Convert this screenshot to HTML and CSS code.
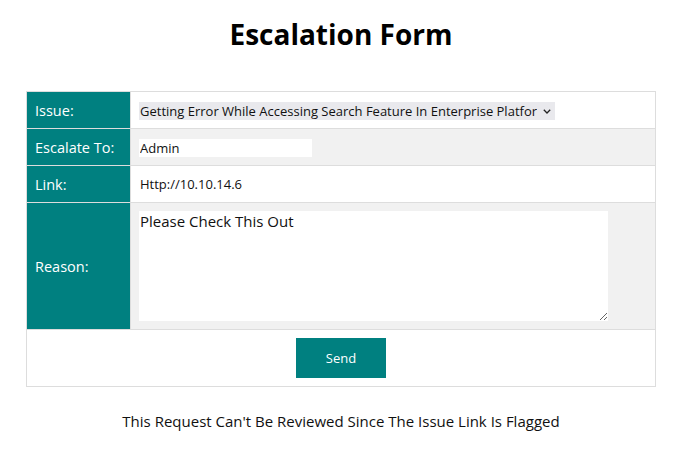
FILE: index.html
```html
<!DOCTYPE html>
<html>
<head>
<meta charset="utf-8">
<link rel="stylesheet" href="styles.css">
</head>
<body>
<div class="page">
<h1 class="title">Escalation Form</h1>
<table class="form-table">
  <tr class="row">
    <td class="label">Issue:</td>
    <td class="field">
      <span class="select-wrap">
        <select class="issue-select">
          <option>Getting Error While Accessing Search Feature In Enterprise Platform</option>
        </select>
        <svg class="chevron" width="8" height="5" viewBox="0 0 8 5"><path d="M0.8 0.8 L4 4 L7.2 0.8" fill="none" stroke="#222" stroke-width="1.3"/></svg>
      </span>
    </td>
  </tr>
  <tr class="row alt">
    <td class="label">Escalate To:</td>
    <td class="field"><input class="to-input" type="text" value="Admin"></td>
  </tr>
  <tr class="row">
    <td class="label">Link:</td>
    <td class="field"><input class="link-input" type="text" value="Http://10.10.14.6"></td>
  </tr>
  <tr class="row alt reason-row">
    <td class="label">Reason:</td>
    <td class="field"><textarea class="reason-area">Please Check This Out</textarea></td>
  </tr>
  <tr class="row send-row">
    <td class="send-cell" colspan="2"><button class="send-btn">Send</button></td>
  </tr>
</table>
<p class="notice">This Request Can't Be Reviewed Since The Issue Link Is Flagged</p>
</div>
</body>
</html>
```
FILE: styles.css
```css
html, body {
  margin: 0;
  padding: 0;
  background: #ffffff;
}
body {
  font-family: "Open Sans", "Noto Sans", sans-serif;
  color: #111;
}
.page {
  width: 682px;
}
.title {
  margin: 0;
  padding-top: 16px;
  height: 58px;
  box-sizing: border-box;
  text-align: center;
  font-size: 28px;
  font-weight: 700;
  line-height: 36px;
  color: #000;
}
.form-table {
  width: 630px;
  margin: 33px auto 0;
  border-collapse: collapse;
  border: 1px solid #ddd;
}
.row td {
  border-top: 1px solid #ddd;
  height: 37px;
  padding: 0 8px;
  box-sizing: border-box;
}
.alt td {
  background: #f1f1f1;
}
.label {
  width: 104px;
  background: #008080 !important;
  color: #fff;
  font-size: 14.5px;
  border-right: 1px solid #ddd;
}
.field {
  font-size: 13px;
}
.select-wrap {
  position: relative;
  display: inline-block;
  vertical-align: middle;
}
.issue-select {
  -webkit-appearance: none;
  appearance: none;
  display: block;
  width: 416px;
  height: 18px;
  border: none;
  border-radius: 0;
  background: #e9e9ed;
  font-family: inherit;
  font-size: 13px;
  padding: 0 18px 0 1px;
  color: #111;
}
.chevron {
  position: absolute;
  right: 4px;
  top: 7px;
  pointer-events: none;
}
.to-input {
  width: 173px;
  height: 18px;
  border: none;
  background: #fff;
  font-family: inherit;
  font-size: 13px;
  padding: 0 1px;
  box-sizing: border-box;
  color: #111;
  vertical-align: middle;
}
.link-input {
  width: 300px;
  border: none;
  background: transparent;
  font-family: inherit;
  font-size: 13px;
  padding: 0 1px;
  color: #111;
}
.reason-row td {
  height: 127px;
}
.reason-row .field {
  padding-top: 8px;
  padding-bottom: 8px;
  vertical-align: top;
}
.reason-area {
  display: block;
  width: 469px;
  height: 110px;
  border: none;
  background: #fff;
  font-family: inherit;
  font-size: 15px;
  padding: 0 1px;
  box-sizing: border-box;
  color: #111;
  resize: both;
}
.send-row td {
  height: 57px;
  text-align: center;
}
.send-btn {
  width: 90px;
  height: 40px;
  border: none;
  background: #008080;
  color: #fff;
  font-family: inherit;
  font-size: 13px;
}
.notice {
  margin: 24px 0 0;
  text-align: center;
  font-size: 15px;
  color: #111;
}
```
